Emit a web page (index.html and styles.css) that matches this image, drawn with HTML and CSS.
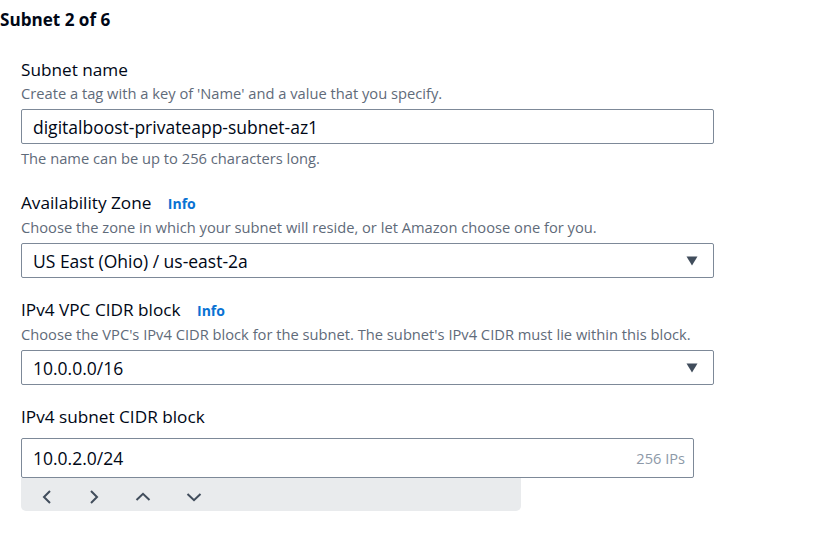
FILE: index.html
```html
<!DOCTYPE html>
<html>
<head>
<meta charset="utf-8">
<link rel="stylesheet" href="styles.css">
</head>
<body>
<div class="page">
  <h2 class="title">Subnet 2 of 6</h2>
  <div class="fields">
    <div class="field">
      <div class="label">Subnet name</div>
      <div class="desc">Create a tag with a key of 'Name' and a value that you specify.</div>
      <div class="input">digitalboost-privateapp-subnet-az1</div>
      <div class="constraint">The name can be up to 256 characters long.</div>
    </div>
    <div class="field">
      <div class="label">Availability Zone <span class="info">Info</span></div>
      <div class="desc">Choose the zone in which your subnet will reside, or let Amazon choose one for you.</div>
      <div class="input select"><span>US East (Ohio) / us-east-2a</span>
        <svg class="caret" width="12" height="10" viewBox="0 0 12 10"><path d="M0.5 0.5h11L6 9.5z" fill="#414d5c"/></svg>
      </div>
    </div>
    <div class="field">
      <div class="label">IPv4 VPC CIDR block <span class="info">Info</span></div>
      <div class="desc">Choose the VPC's IPv4 CIDR block for the subnet. The subnet's IPv4 CIDR must lie within this block.</div>
      <div class="input select"><span>10.0.0.0/16</span>
        <svg class="caret" width="12" height="10" viewBox="0 0 12 10"><path d="M0.5 0.5h11L6 9.5z" fill="#414d5c"/></svg>
      </div>
    </div>
    <div class="field">
      <div class="label">IPv4 subnet CIDR block</div>
      <div class="cidr">
        <div class="input tall"><span>10.0.2.0/24</span><span class="ips">256 IPs</span></div>
        <div class="stepper">
          <svg width="12" height="14" viewBox="0 0 12 14"><path d="M9 1L3 7l6 6" fill="none" stroke="#414d5c" stroke-width="2"/></svg>
          <svg width="12" height="14" viewBox="0 0 12 14"><path d="M3 1l6 6-6 6" fill="none" stroke="#414d5c" stroke-width="2"/></svg>
          <svg width="16" height="14" viewBox="0 0 16 14"><path d="M1.5 10L8 3.8l6.5 6.2" fill="none" stroke="#414d5c" stroke-width="2"/></svg>
          <svg width="16" height="14" viewBox="0 0 16 14"><path d="M1.5 4L8 10.2 14.5 4" fill="none" stroke="#414d5c" stroke-width="2"/></svg>
        </div>
      </div>
    </div>
  </div>
</div>
</body>
</html>
```

FILE: styles.css
```css
html, body {
  margin: 0;
  padding: 0;
  background: #ffffff;
}
body {
  font-family: "Open Sans", "Noto Sans", sans-serif;
  color: #16191f;
}
.page {
  width: 830px;
}
.title {
  margin: 0;
  padding-top: 9px;
  font-size: 17.1px;
  line-height: 22px;
  font-weight: 700;
  color: #000716;
}
.fields {
  padding-left: 21px;
  padding-top: 27px;
  display: flex;
  flex-direction: column;
  gap: 20px;
}
.field {
  display: flex;
  flex-direction: column;
}
.label {
  font-size: 17.2px;
  line-height: 24px;
  color: #000716;
}
.info {
  font-size: 14px;
  font-weight: 700;
  color: #0972d3;
  margin-left: 12px;
}
.desc {
  font-size: 14.7px;
  line-height: 21px;
  color: #5f6b7a;
  margin-top: 1px;
  margin-bottom: 5px;
}
.input {
  width: 693px;
  box-sizing: border-box;
  height: 35px;
  border: 1px solid #7d8998;
  border-radius: 2px;
  padding: 0 11px;
  display: flex;
  align-items: center;
  justify-content: space-between;
  font-size: 17.5px;
  color: #000716;
}
.constraint {
  font-size: 14.7px;
  line-height: 21px;
  color: #5f6b7a;
  margin-top: 4px;
  margin-bottom: 2px;
}
.caret {
  margin-right: 4px;
}
.cidr {
  margin-top: 9px;
}
.input.tall {
  width: 673px;
  height: 40px;
  padding-right: 8px;
}
.ips {
  font-size: 14.6px;
  color: #8d99a8;
}
.stepper {
  width: 500px;
  height: 33px;
  background: #e9ebed;
  border-radius: 0 0 5px 5px;
  display: flex;
  align-items: center;
  padding-left: 20px;
  padding-top: 5px;
  box-sizing: border-box;
  gap: 35px;
}
```
